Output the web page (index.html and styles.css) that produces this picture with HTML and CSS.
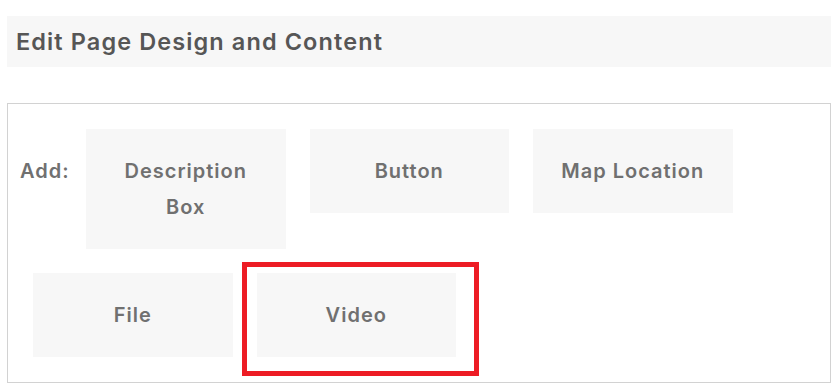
FILE: index.html
```html
<!DOCTYPE html>
<html>
<head>
<meta charset="utf-8">
<link rel="stylesheet" href="styles.css">
</head>
<body>
<div class="page">
  <div class="header"><h1 class="title">Edit Page Design and Content</h1></div>
  <div class="panel">
    <div class="label">Add:</div>
    <div class="item">Description Box</div>
    <div class="item">Button</div>
    <div class="item">Map Location</div>
    <div class="item">File</div>
    <div class="item item-marked">Video<span class="marker"></span></div>
  </div>
</div>
</body>
</html>
```
FILE: styles.css
```css
html, body {
  margin: 0;
  padding: 0;
  background: #ffffff;
}
body {
  font-family: Inter, "Open Sans", "Liberation Sans", sans-serif;
  overflow: hidden;
}
.page {
  padding: 16px 0 0 7px;
  width: 824px;
}
.header {
  background: #f7f7f7;
  height: 51px;
  display: flex;
  align-items: center;
  padding-left: 9px;
}
.title {
  margin: 0;
  font-size: 23.5px;
  font-weight: 600;
  color: #565656;
  letter-spacing: 1.1px;
}
.panel {
  margin-top: 36px;
  border: 1px solid #d2d2d2;
  padding: 13px 13px;
  display: flex;
  flex-wrap: wrap;
  align-items: flex-start;
}
.label {
  margin: 12px 0 12px -1px;
  width: 54px;
  padding: 24px 0;
  line-height: 36px;
  font-size: 20px;
  font-weight: 600;
  color: #707070;
  letter-spacing: 1px;
}
.item {
  position: relative;
  margin: 12px;
  width: 199.5px;
  box-sizing: border-box;
  padding: 24px 22px;
  background: #f7f7f7;
  text-align: center;
  line-height: 36px;
  font-size: 20px;
  font-weight: 600;
  color: #707070;
  letter-spacing: 1px;
}
.marker {
  position: absolute;
  left: -15px;
  top: -11px;
  width: 237px;
  height: 114px;
  box-sizing: border-box;
  border: 5px solid #ed1c24;
}
```
